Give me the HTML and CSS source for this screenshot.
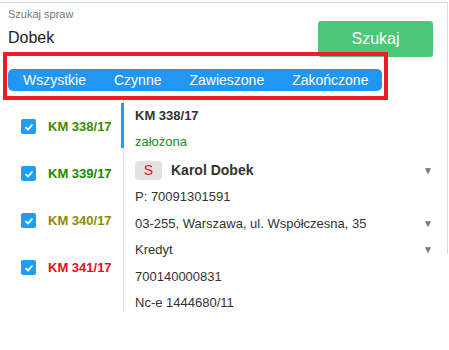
FILE: index.html
```html
<!DOCTYPE html>
<html lang="pl">
<head>
    <meta charset="UTF-8">
    <meta name="viewport" content="width=device-width, initial-scale=1.0">
    <title>Szukaj spraw</title>
    <link rel="stylesheet" href="styles.css">
</head>
<body>
  <div class="app">
    <div class="search-row">
      <div class="search-field">
        <label class="search-label">Szukaj spraw</label>
        <div class="search-value">Dobek</div>
      </div>
      <button class="btn-search">Szukaj</button>
    </div>

    <div class="tabs">
      <span class="tab">Wszystkie</span>
      <span class="tab">Czynne</span>
      <span class="tab">Zawieszone</span>
      <span class="tab">Zakończone</span>
    </div>

    <div class="content">
      <ul class="case-list">
        <li class="case active">
          <span class="check"><svg width="10" height="10" viewBox="0 0 10 10"><path d="M1.5 5.2 L4 7.5 L8.5 2.5" fill="none" stroke="#fff" stroke-width="1.8"/></svg></span>
          <span class="case-no green">KM 338/17</span>
        </li>
        <li class="case">
          <span class="check"><svg width="10" height="10" viewBox="0 0 10 10"><path d="M1.5 5.2 L4 7.5 L8.5 2.5" fill="none" stroke="#fff" stroke-width="1.8"/></svg></span>
          <span class="case-no green2">KM 339/17</span>
        </li>
        <li class="case">
          <span class="check"><svg width="10" height="10" viewBox="0 0 10 10"><path d="M1.5 5.2 L4 7.5 L8.5 2.5" fill="none" stroke="#fff" stroke-width="1.8"/></svg></span>
          <span class="case-no olive">KM 340/17</span>
        </li>
        <li class="case">
          <span class="check"><svg width="10" height="10" viewBox="0 0 10 10"><path d="M1.5 5.2 L4 7.5 L8.5 2.5" fill="none" stroke="#fff" stroke-width="1.8"/></svg></span>
          <span class="case-no red">KM 341/17</span>
        </li>
      </ul>

      <div class="details">
        <div class="row title">KM 338/17</div>
        <div class="row status">założona</div>
        <div class="row person">
          <span class="badge">S</span>
          <span class="name">Karol Dobek</span>
          <span class="caret">&#9660;</span>
        </div>
        <div class="row">P: 70091301591</div>
        <div class="row">
          <span>03-255, Warszawa, ul. Współczesna, 35</span>
          <span class="caret">&#9660;</span>
        </div>
        <div class="row">
          <span>Kredyt</span>
          <span class="caret">&#9660;</span>
        </div>
        <div class="row">700140000831</div>
        <div class="row">Nc-e 1444680/11</div>
      </div>
    </div>

    <div class="highlight"></div>
  </div>
</body>
</html>
```

FILE: styles.css
```css
body {
  margin: 0;
  padding: 0;
  background: #fff;
  color: #333;
  font-family: "Liberation Sans", Arial, sans-serif;
}

.app {
  position: relative;
  width: 448px;
  margin-top: 2px;
  padding-bottom: 38px;
  border-top: 1px solid #ddd;
}

/* bordure droite du panneau, plus courte que le contenu */
.app::after {
  content: "";
  position: absolute;
  right: 0;
  top: 0;
  width: 1px;
  height: 251px;
  background: #ddd;
}

/* recherche */
.search-row {
  display: flex;
  align-items: flex-start;
}

.search-field {
  flex: 1;
  padding: 5px 0 0 8px;
}

.search-label {
  display: block;
  font-size: 11px;
  color: #777;
  line-height: 13px;
}

.search-value {
  font-size: 16px;
  color: #222;
  margin-top: 8px;
  line-height: 18px;
}

.btn-search {
  width: 115px;
  height: 36px;
  margin: 18px 15px 0 0;
  border: none;
  border-radius: 3px;
  background: #4bc878;
  color: #fff;
  font-family: inherit;
  font-size: 16px;
}

/* onglets */
.tabs {
  display: inline-flex;
  margin: 12px 0 0 8px;
  height: 22px;
  align-items: center;
  background: #2196f3;
  border-radius: 5px;
}

.tab {
  padding: 0 14px;
  color: #fff;
  font-size: 14px;
  line-height: 22px;
}

.tab:first-child {
  padding-left: 15px;
}

/* contenu */
.content {
  display: flex;
  margin-top: 9px;
}

.case-list {
  list-style: none;
  margin: 0;
  padding: 3px 0 0 0;
  width: 124px;
  height: 212px;
  box-sizing: border-box;
  border-right: 1px solid #ddd;
}

.case {
  position: relative;
  display: flex;
  align-items: center;
  height: 47px;
}

.case.active::after {
  content: "";
  position: absolute;
  right: -1px;
  top: 0;
  width: 3px;
  height: 45px;
  background: #1ba1f2;
}

.check {
  display: flex;
  align-items: center;
  justify-content: center;
  width: 15px;
  height: 15px;
  margin-left: 21px;
  border-radius: 2px;
  background: #1e9ff2;
}

.case-no {
  margin-left: 12px;
  font-size: 13px;
  font-weight: bold;
}

.green { color: #3f8a00; }
.green2 { color: #178a00; }
.olive { color: #8f8a00; }
.red { color: #e3101c; }

.details {
  flex: 1;
  padding: 2px 15px 0 11px;
  font-size: 13px;
}

.row {
  display: flex;
  align-items: center;
  height: 26.5px;
}

.title {
  font-weight: bold;
}

.status {
  color: #218a21;
}

.person {
  padding-top: 2px;
}

.badge {
  width: 27px;
  height: 19px;
  line-height: 19px;
  text-align: center;
  border-radius: 4px;
  background: #e2e2e2;
  color: #e8101c;
  font-size: 14px;
  margin-right: 9px;
}

.name {
  font-weight: bold;
  font-size: 14px;
}

.caret {
  margin-left: auto;
  font-size: 10px;
  color: #777;
}

/* cadre rouge */
.highlight {
  position: absolute;
  left: 3px;
  top: 49px;
  width: 377px;
  height: 40px;
  border: 4px solid #ee1c25;
}
```
